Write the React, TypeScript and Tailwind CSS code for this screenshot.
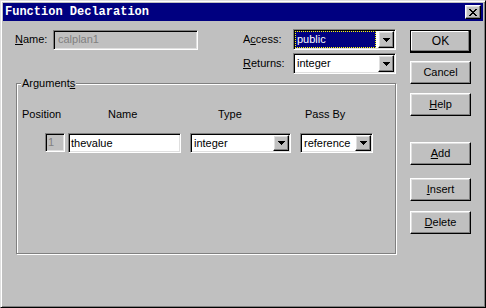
import React from 'react';

const raised =
  "border border-t-white border-l-white border-r-black border-b-black shadow-[inset_-1px_-1px_0_#808080,inset_1px_1px_0_#dfdfdf]";
const sunken =
  "border border-t-[#808080] border-l-[#808080] border-r-white border-b-white shadow-[inset_1px_1px_0_#000,inset_-1px_-1px_0_#dfdfdf]";
const ui = "font-[family-name:'Liberation_Sans',Arial,sans-serif] text-[11px] leading-[13px] text-black";

const Arrow = () => (
  <svg width="7" height="4" viewBox="0 0 7 4" shapeRendering="crispEdges">
    <rect x="0" y="0" width="7" height="1" fill="#000" />
    <rect x="1" y="1" width="5" height="1" fill="#000" />
    <rect x="2" y="2" width="3" height="1" fill="#000" />
    <rect x="3" y="3" width="1" height="1" fill="#000" />
  </svg>
);

const Combo = ({ value, className, focused }: { value: string; className: string; focused?: boolean }) => (
  <div className={`${sunken} ${className} flex p-[1px] bg-white`}>
    {focused ? (
      <div className="flex-1 flex items-center bg-[#000080] border border-dotted border-[#ffff00] mr-[2px] pl-[1px] text-white">
        {value}
      </div>
    ) : (
      <div className="flex-1 flex items-center pl-[2px]">{value}</div>
    )}
    <div className={`${raised} w-[16px] bg-[#c0c0c0] flex items-center justify-center`}>
      <Arrow />
    </div>
  </div>
);

const Btn = ({ children, className, def }: { children: React.ReactNode; className: string; def?: boolean }) => (
  <div
    className={`w-[61px] h-[23px] flex items-center justify-center bg-[#c0c0c0] ${className} ${
      def
        ? "border border-black shadow-[inset_-1px_-1px_0_#000,inset_-2px_-2px_0_#808080,inset_1px_1px_0_#fff]"
        : raised
    }`}
  >
    {children}
  </div>
);

export default function App() {
  return (
    <div
      className={`${ui} w-[486px] h-[308px] bg-[#c0c0c0] p-[2px] border border-t-[#dfdfdf] border-l-[#dfdfdf] border-r-black border-b-black shadow-[inset_1px_1px_0_#fff,inset_-1px_-1px_0_#808080]`}
    >
      {/* title bar */}
      <div className="h-[18px] bg-[#000080] flex items-start justify-between pl-[2px] pr-[2px]">
        <span className="font-[family-name:'Liberation_Mono',monospace] font-bold text-[12px] leading-[18px] text-white">
          Function Declaration
        </span>
        <div className={`${raised} mt-[2px] w-[16px] h-[14px] bg-[#c0c0c0] flex items-center justify-center`}>
          <svg width="8" height="7" viewBox="0 0 8 7" shapeRendering="crispEdges">
            <path d="M0 0h2v1H0zM6 0h2v1H6zM1 1h2v1H1zM5 1h2v1H5zM2 2h4v1H2zM3 3h2v1H3zM2 4h4v1H2zM1 5h2v1H1zM5 5h2v1H5zM0 6h2v1H0zM6 6h2v1H6z" fill="#000" />
          </svg>
        </div>
      </div>

      <div className="flex">
        {/* left side */}
        <div className="w-[394px]">
          <div className="mt-[8px] flex items-center h-[21px]">
            <span className="ml-[12px] w-[38px]">
              <u>N</u>ame:
            </span>
            <div className={`${sunken} w-[145px] h-[20px] flex items-center pl-[4px] text-[#808080]`}>calplan1</div>
            <span className="ml-[45px] w-[50px]">
              A<u>c</u>cess:
            </span>
            <Combo value="public" className="w-[103px] h-[21px]" focused />
          </div>
          <div className="mt-[3px] flex items-center h-[21px]">
            <span className="ml-[240px] w-[50px]">
              <u>R</u>eturns:
            </span>
            <Combo value="integer" className="w-[103px] h-[21px]" />
          </div>

          {/* group box */}
          <div className="relative ml-[13px] mt-[9px] w-[380px] h-[171px] border border-[#808080] shadow-[inset_1px_1px_0_#fff,1px_1px_0_#fff]">
            <span className="absolute left-[4px] top-[-7px] bg-[#c0c0c0] px-[1px]">
              Argument<u>s</u>
            </span>
            <div className="flex pt-[24px] pl-[5px]">
              <span className="w-[86px]">Position</span>
              <span className="w-[110px]">Name</span>
              <span className="w-[87px]">Type</span>
              <span>Pass By</span>
            </div>
            <div className="flex mt-[12px] pl-[28px]">
              <div className={`${sunken} w-[20px] h-[19px] flex items-center pl-[2px] text-[#808080]`}>1</div>
              <div className={`${sunken} ml-[3px] w-[113px] h-[20px] bg-white flex items-center pl-[2px]`}>
                thevalue
              </div>
              <Combo value="integer" className="ml-[9px] w-[101px] h-[20px]" />
              <Combo value="reference" className="ml-[9px] w-[73px] h-[20px]" />
            </div>
          </div>
        </div>

        {/* buttons */}
        <div className="ml-[13px] flex flex-col">
          <Btn className="mt-[9px] text-[12px]" def>
            OK
          </Btn>
          <Btn className="mt-[8px]">Cancel</Btn>
          <Btn className="mt-[9px]">
            <span>
              <u>H</u>elp
            </span>
          </Btn>
          <Btn className="mt-[26px]">
            <span>
              <u>A</u>dd
            </span>
          </Btn>
          <Btn className="mt-[13px]">
            <span>
              <u>I</u>nsert
            </span>
          </Btn>
          <Btn className="mt-[10px]">
            <span>
              <u>D</u>elete
            </span>
          </Btn>
        </div>
      </div>
    </div>
  );
}
